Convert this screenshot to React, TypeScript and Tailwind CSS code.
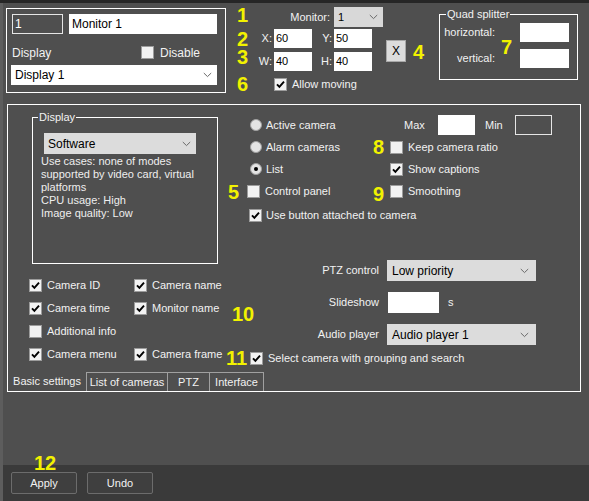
import React from "react";

function Check({ checked }: { checked?: boolean }) {
  return (
    <span className="w-[13px] h-[13px] bg-[#f2f2f2] border border-[#9c9c9c] shrink-0 flex items-center justify-center">
      {checked && (
        <svg width="9" height="9" viewBox="0 0 9 9">
          <path d="M1 4.3 L3.4 6.8 L8 1.6" stroke="#000" strokeWidth="1.9" fill="none" />
        </svg>
      )}
    </span>
  );
}

function Radio({ on }: { on?: boolean }) {
  return (
    <span className="w-[12px] h-[12px] rounded-full bg-[#e4e4e4] border border-[#a0a0a0] shrink-0 flex items-center justify-center">
      {on && <span className="w-[4px] h-[4px] rounded-full bg-black" />}
    </span>
  );
}

function Chevron() {
  return (
    <svg width="9" height="6" viewBox="0 0 9 6" className="shrink-0">
      <path d="M0.8 1 L4.5 4.6 L8.2 1" stroke="#6a6a6a" strokeWidth="1" fill="none" />
    </svg>
  );
}

function Num({ children, className }: { children: React.ReactNode; className: string }) {
  return (
    <div className={"absolute font-bold text-[20px] leading-[14px] text-[#f2f200] " + className}>{children}</div>
  );
}

export default function App() {
  return (
    <div className="relative w-[589px] h-[501px] bg-[#4f4f4f] overflow-hidden flex flex-col font-['Liberation_Sans',Arial,sans-serif] text-[11px] text-[#f2f2f2]">
      <div className="h-[3px] bg-[#262626] shrink-0" />
      <div className="flex-1 flex flex-col border-l-[3px] border-[#5d5d5d]">
        {/* Top section */}
        <div className="h-[101px] flex shrink-0">
          {/* Monitor panel */}
          <div className="ml-[3px] mt-[5px] w-[220px] h-[85px] border border-white flex flex-col px-[4px]">
            <div className="mt-[5px] flex h-[20px]">
              <div className="ml-[1px] w-[51px] h-[20px] border border-[#e6e6e6] flex items-center pl-[2px] text-[12px] text-white">1</div>
              <div className="ml-[6px] w-[148px] h-[20px] bg-white flex items-center pl-[3px] text-[12px] text-black">Monitor 1</div>
            </div>
            <div className="mt-[11px] h-[15px] flex items-center">
              <span className="ml-[1px] w-[129px] text-[12px]">Display</span>
              <Check />
              <span className="ml-[6px] text-[12px]">Disable</span>
            </div>
            <div className="mt-[5px] w-[206px] h-[20px] bg-white flex items-center justify-between pl-[4px] pr-[5px] text-[12px] text-black">
              <span>Display 1</span>
              <Chevron />
            </div>
          </div>

          {/* Position */}
          <div className="w-[213px] flex flex-col">
            <div className="mt-[4px] h-[20px] flex items-center">
              <span className="w-[104px] text-right">Monitor:</span>
              <div className="ml-[4px] w-[49px] h-[20px] bg-[#d8d8d8] flex items-center justify-between pl-[4px] pr-[5px] text-black">
                <span>1</span>
                <Chevron />
              </div>
            </div>
            <div className="mt-[2px] flex items-center">
              <div className="flex flex-col">
                <div className="h-[19px] flex items-center">
                  <span className="w-[46px] text-right">X:</span>
                  <div className="ml-[2px] w-[38px] h-[19px] bg-white flex items-center pl-[2px] text-black">60</div>
                  <span className="w-[20px] text-right">Y:</span>
                  <div className="ml-[2px] w-[38px] h-[19px] bg-white flex items-center pl-[2px] text-black">50</div>
                </div>
                <div className="mt-[4px] h-[19px] flex items-center">
                  <span className="w-[46px] text-right">W:</span>
                  <div className="ml-[2px] w-[38px] h-[19px] bg-white flex items-center pl-[2px] text-black">40</div>
                  <span className="w-[20px] text-right">H:</span>
                  <div className="ml-[2px] w-[38px] h-[19px] bg-white flex items-center pl-[2px] text-black">40</div>
                </div>
              </div>
              <div className="ml-[14px] mt-[2px] w-[20px] h-[22px] bg-[#dcdcdc] border border-[#a8a8a8] flex items-center justify-center text-black text-[12px]">X</div>
            </div>
            <div className="mt-[7px] h-[13px] flex items-center pl-[48px]">
              <Check checked />
              <span className="ml-[5px]">Allow moving</span>
            </div>
          </div>

          {/* Quad splitter */}
          <div className="mt-[11px] w-[139px] h-[66px] border border-white relative flex flex-col">
            <span className="absolute left-[6px] -top-[7px] px-[1px] bg-[#4f4f4f] leading-[13px]">Quad splitter</span>
            <div className="mt-[8px] h-[19px] flex items-center">
              <span className="w-[55px] text-right">horizontal:</span>
              <div className="ml-[25px] w-[49px] h-[19px] bg-white" />
            </div>
            <div className="mt-[7px] h-[19px] flex items-center">
              <span className="w-[55px] text-right">vertical:</span>
              <div className="ml-[25px] w-[49px] h-[19px] bg-white" />
            </div>
          </div>
        </div>

        {/* Main panel */}
        <div className="ml-[4px] w-[574px] h-[288px] border border-white flex flex-col shrink-0">
          <div className="h-[267px] flex">
            {/* Left column */}
            <div className="w-[222px] flex flex-col">
              <div className="ml-[24px] mt-[12px] w-[186px] h-[147px] border border-white relative flex flex-col">
                <span className="absolute left-[5px] -top-[7px] px-[1px] bg-[#4f4f4f] leading-[13px]">Display</span>
                <div className="ml-[11px] mt-[15px] w-[152px] h-[21px] bg-[#dcdcdc] flex items-center justify-between pl-[4px] pr-[5px] text-black text-[12px]">
                  <span>Software</span>
                  <Chevron />
                </div>
                <div className="ml-[8px] mt-[1px] leading-[13px] text-[#eeeeee]">
                  <div>Use cases: none of modes</div>
                  <div>supported by video card, virtual</div>
                  <div>platforms</div>
                  <div>CPU usage: High</div>
                  <div>Image quality: Low</div>
                </div>
              </div>
              <div className="mt-[10px] pl-[21px] grid grid-cols-[105px_auto]">
                <div className="h-[23px] flex items-center"><Check checked /><span className="ml-[5px]">Camera ID</span></div>
                <div className="h-[23px] flex items-center"><Check checked /><span className="ml-[5px]">Camera name</span></div>
                <div className="h-[23px] flex items-center"><Check checked /><span className="ml-[5px]">Camera time</span></div>
                <div className="h-[23px] flex items-center"><Check checked /><span className="ml-[5px]">Monitor name</span></div>
                <div className="h-[23px] flex items-center"><Check /><span className="ml-[5px]">Additional info</span></div>
                <div className="h-[23px]" />
                <div className="h-[23px] flex items-center"><Check checked /><span className="ml-[5px]">Camera menu</span></div>
                <div className="h-[23px] flex items-center"><Check checked /><span className="ml-[5px]">Camera frame</span></div>
              </div>
            </div>

            {/* Right column */}
            <div className="flex-1 flex flex-col">
              <div className="mt-[9px] flex">
                <div className="w-[160px] flex flex-col">
                  <div className="h-[22px] flex items-center pl-[20px]"><Radio /><span className="ml-[4px]">Active camera</span></div>
                  <div className="h-[22px] flex items-center pl-[20px]"><Radio /><span className="ml-[4px]">Alarm cameras</span></div>
                  <div className="h-[22px] flex items-center pl-[20px]"><Radio on /><span className="ml-[4px]">List</span></div>
                  <div className="h-[22px] flex items-center pl-[17px]"><Check /><span className="ml-[5px]">Control panel</span></div>
                </div>
                <div className="flex flex-col">
                  <div className="h-[22px] flex items-center">
                    <span className="ml-[14px] w-[34px]">Max</span>
                    <div className="w-[37px] h-[20px] bg-white" />
                    <span className="ml-[10px] w-[30px]">Min</span>
                    <div className="w-[37px] h-[20px] border border-[#e6e6e6]" />
                  </div>
                  <div className="h-[22px] flex items-center"><Check /><span className="ml-[5px]">Keep camera ratio</span></div>
                  <div className="h-[22px] flex items-center"><Check checked /><span className="ml-[5px]">Show captions</span></div>
                  <div className="h-[22px] flex items-center"><Check /><span className="ml-[5px]">Smoothing</span></div>
                </div>
              </div>
              <div className="mt-[2px] h-[22px] flex items-center pl-[19px]">
                <Check checked />
                <span className="ml-[4px]">Use button attached to camera</span>
              </div>

              <div className="mt-[34px] h-[21px] flex items-center">
                <span className="w-[149px] text-right">PTZ control</span>
                <div className="ml-[8px] w-[149px] h-[21px] bg-[#dcdcdc] flex items-center justify-between pl-[5px] pr-[7px] text-black text-[12px]">
                  <span>Low priority</span>
                  <Chevron />
                </div>
              </div>
              <div className="mt-[11px] h-[21px] flex items-center">
                <span className="w-[149px] text-right">Slideshow</span>
                <div className="ml-[9px] w-[51px] h-[21px] bg-white" />
                <span className="ml-[9px]">s</span>
              </div>
              <div className="mt-[11px] h-[21px] flex items-center">
                <span className="w-[149px] text-right">Audio player</span>
                <div className="ml-[8px] w-[149px] h-[21px] bg-[#dcdcdc] flex items-center justify-between pl-[5px] pr-[7px] text-black text-[12px]">
                  <span>Audio player 1</span>
                  <Chevron />
                </div>
              </div>
              <div className="mt-[7px] h-[13px] flex items-center pl-[20px]">
                <Check checked />
                <span className="ml-[5px]">Select camera with grouping and search</span>
              </div>
            </div>
          </div>

          {/* Tabs */}
          <div className="h-[19px] flex">
            <div className="w-[78px] flex items-center justify-center">Basic settings</div>
            <div className="w-[82px] border-t border-l border-r border-[#a0a0a0] flex items-center justify-center pt-[1px]">List of cameras</div>
            <div className="w-[42px] border-t border-r border-[#a0a0a0] flex items-center justify-center pt-[1px]">PTZ</div>
            <div className="w-[54px] border-t border-r border-[#a0a0a0] flex items-center justify-center pt-[1px]">Interface</div>
          </div>
        </div>

        <div className="flex-1" />

        {/* Bottom bar */}
        <div className="h-[36px] bg-[#3a3a3a] flex items-center shrink-0">
          <div className="ml-[8px] w-[66px] h-[22px] bg-[#3f3f3f] border border-[#6c6c6c] rounded-[2px] flex items-center justify-center">Apply</div>
          <div className="ml-[10px] w-[66px] h-[22px] bg-[#3f3f3f] border border-[#6c6c6c] rounded-[2px] flex items-center justify-center">Undo</div>
        </div>
      </div>

      {/* Annotation callouts */}
      <Num className="left-[237px] top-[8px]">1</Num>
      <Num className="left-[237px] top-[32px]">2</Num>
      <Num className="left-[237px] top-[50px]">3</Num>
      <Num className="left-[413px] top-[45px]">4</Num>
      <Num className="left-[237px] top-[77px]">6</Num>
      <Num className="left-[501px] top-[40px]">7</Num>
      <Num className="left-[228px] top-[185px]">5</Num>
      <Num className="left-[373px] top-[140px]">8</Num>
      <Num className="left-[373px] top-[187px]">9</Num>
      <Num className="left-[232px] top-[307px]">10</Num>
      <Num className="left-[226px] top-[351px]">11</Num>
      <Num className="left-[34px] top-[456px]">12</Num>
    </div>
  );
}
